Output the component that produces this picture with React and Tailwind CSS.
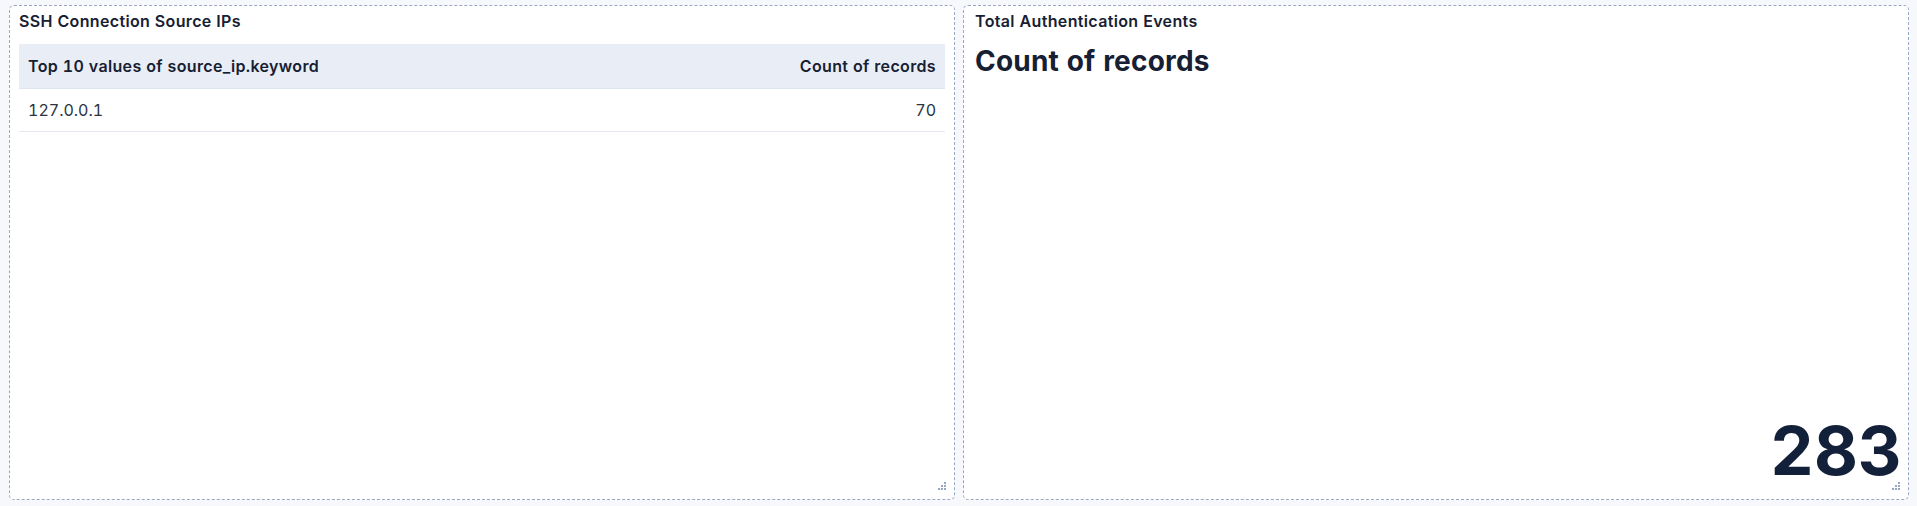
import React from "react";

function ResizeHandle() {
  const dots = [
    [6, 0],
    [3, 3], [6, 3],
    [0, 6], [3, 6], [6, 6],
  ];
  return (
    <svg width="9" height="9" viewBox="0 0 9 9" className="absolute right-[7px] bottom-[8px]">
      {dots.map(([x, y], i) => (
        <rect key={i} x={x} y={y} width="2" height="2" fill="#98a8c4" />
      ))}
    </svg>
  );
}

function Panel({ children }) {
  return (
    <div className="relative w-[946px] h-[495px] rounded-[5px] border border-dashed border-[#98a8c4] bg-white shrink-0">
      {children}
      <ResizeHandle />
    </div>
  );
}

export default function App() {
  return (
    <div
      className="flex w-[1917px] h-[506px] bg-[#f6f8fb] pt-[5px] pl-[9px] gap-[8px] text-[#172033] tabular-nums"
      style={{ fontFamily: "Inter, 'Noto Sans', sans-serif" }}
    >
      <Panel>
        <div className="flex flex-col h-full px-[9px]">
          <div className="pt-[5px] h-[38px] text-[16px] font-semibold leading-[20px] tracking-[0.35px]">
            SSH Connection Source IPs
          </div>
          <div className="flex items-center justify-between h-[45px] bg-[#e9eef6] border-b border-[#dfe5ef] px-[9px] text-[16px] font-semibold tracking-[0.35px]">
            <span>Top 10 values of source_ip.keyword</span>
            <span>Count of records</span>
          </div>
          <div className="flex items-center justify-between h-[43px] border-b border-[#e3e8f0] px-[9px] text-[16px] text-[#2a3342]">
            <span>127.0.0.1</span>
            <span>70</span>
          </div>
        </div>
      </Panel>
      <Panel>
        <div className="flex flex-col h-full pl-[11px] pr-[6px]">
          <div className="pt-[5px] text-[16px] font-semibold leading-[20px] tracking-[0.35px]">
            Total Authentication Events
          </div>
          <div className="mt-[13px] text-[28px] font-bold leading-[34px] tracking-[0.2px]">Count of records</div>
          <div className="mt-auto mb-[15px] self-end text-[68px] font-bold leading-[68px] text-[#132039]">
            283
          </div>
        </div>
      </Panel>
      <div className="ml-auto mt-[15px] mb-[16px] w-[2px] bg-[#d3d8e0]" />
    </div>
  );
}
